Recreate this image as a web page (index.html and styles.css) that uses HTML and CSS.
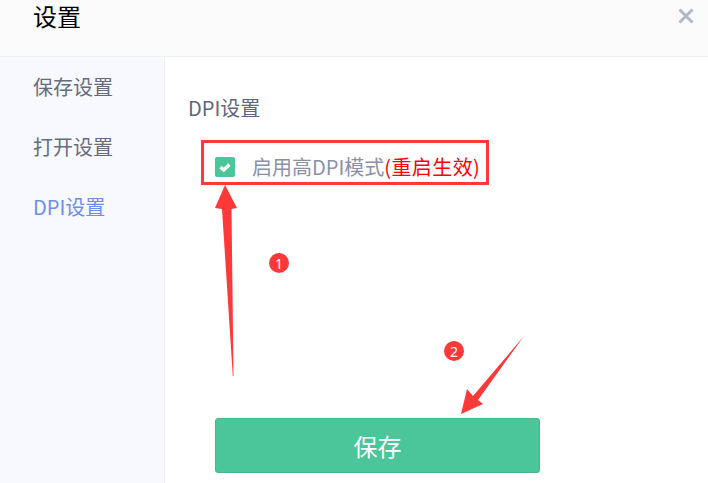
FILE: index.html
```
<!DOCTYPE html>
<html lang="zh-CN">
<head>
<meta charset="utf-8">
<title>设置</title>
<link rel="stylesheet" href="styles.css">
</head>
<body>
<div class="dialog">
  <header class="header">
    <h1 class="title">设置</h1>
    <svg class="close" viewBox="0 0 16 16" width="16" height="16"><path d="M1.5 1.5 14.5 14.5M14.5 1.5 1.5 14.5"/></svg>
  </header>
  <div class="main">
    <nav class="sidebar">
      <a class="nav-item">保存设置</a>
      <a class="nav-item">打开设置</a>
      <a class="nav-item active">DPI设置</a>
    </nav>
    <section class="content">
      <h2 class="section-title">DPI设置</h2>
      <label class="option">
        <span class="checkbox"><svg viewBox="0 0 20 20" width="20" height="20"><path d="M5.5 10.2 8.8 13 14.5 7.6"/></svg></span>
        <span class="option-text">启用高DPI模式<span class="warn">(重启生效)</span></span>
      </label>
      <button class="save">保存</button>
    </section>
  </div>
  <svg class="marks" viewBox="0 0 708 483" width="708" height="483">
    <rect class="box" x="202.5" y="141.5" width="285" height="42"/>
    <path class="mark" d="M225 185 237 208 231.500 209 233.500 376 232.800 376 222 209 215 208Z"/>
    <path class="mark" d="M461 414 467 389 473 396 524 336 478 400 483 404Z"/>
    <circle class="mark" cx="279" cy="263" r="10"/>
    <circle class="mark" cx="454" cy="351" r="10"/>
    <text class="num" x="279" y="268.500">1</text>
    <text class="num" x="454" y="356.500">2</text>
  </svg>
</div>
</body>
</html>
```
FILE: styles.css
```
html, body {
  margin: 0;
  padding: 0;
}
body {
  width: 708px;
  height: 483px;
  overflow: hidden;
  background: #fff;
  font-family: "Noto Sans CJK SC", "Noto Sans", sans-serif;
}
.dialog {
  position: relative;
  width: 708px;
  height: 483px;
  display: flex;
  flex-direction: column;
  overflow: hidden;
}
.header {
  flex: none;
  box-sizing: border-box;
  height: 57px;
  display: flex;
  justify-content: space-between;
  padding: 0 14px 0 33px;
  background: #fbfbfc;
  border-bottom: 1px solid #f0f1f5;
}
.title {
  margin: 0;
  font-family: "Liberation Sans", "Noto Sans CJK SC", sans-serif;
  font-size: 24px;
  line-height: 35px;
  font-weight: 400;
  color: #000;
}
.close {
  margin-top: 8px;
  fill: none;
  stroke: #b4b8c6;
  stroke-width: 3;
}
.main {
  flex: 1;
  display: flex;
  min-height: 0;
}
.sidebar {
  flex: none;
  box-sizing: border-box;
  width: 165px;
  padding-top: 0;
  background: #f8f9fe;
  border-right: 1px solid #eff0f5;
  display: flex;
  flex-direction: column;
}
.nav-item {
  height: 60px;
  line-height: 60px;
  padding-left: 33px;
  font-size: 20px;
  color: #666b80;
}
.nav-item.active {
  color: #6c8cf0;
}
.content {
  flex: 1;
  padding: 37px 0 0 24px;
}
.section-title {
  margin: 0 0 0 -1px;
  font-size: 20px;
  line-height: 28px;
  font-weight: 400;
  color: #62667a;
}
.option {
  margin: 30px 0 0 26px;
  height: 30px;
  display: flex;
  align-items: center;
}
.checkbox {
  width: 20px;
  height: 20px;
  border-radius: 2px;
  background: #4bc69a;
  display: block;
}
.checkbox svg {
  display: block;
  fill: none;
  stroke: #fff;
  stroke-width: 3.5;
}
.option-text {
  margin-left: 17px;
  font-size: 20px;
  line-height: 30px;
  color: #8b90aa;
  white-space: nowrap;
}
.warn {
  color: #f00;
  letter-spacing: 0.4px;
}
.save {
  display: block;
  box-sizing: border-box;
  width: 325px;
  height: 55px;
  margin: 236px 0 0 26px;
  padding: 0;
  border: 1px solid #43b98d;
  border-radius: 3px;
  background: #4bc69a;
  color: #fff;
  font-family: inherit;
  font-size: 24px;
}
.marks {
  position: absolute;
  left: 0;
  top: 0;
  pointer-events: none;
}
.box {
  fill: none;
  stroke: #ff3838;
  stroke-width: 3;
}
.mark {
  fill: #ff3838;
}
.num {
  fill: #fff;
  font-size: 14px;
  text-anchor: middle;
  font-family: "Noto Sans", sans-serif;
}
```
